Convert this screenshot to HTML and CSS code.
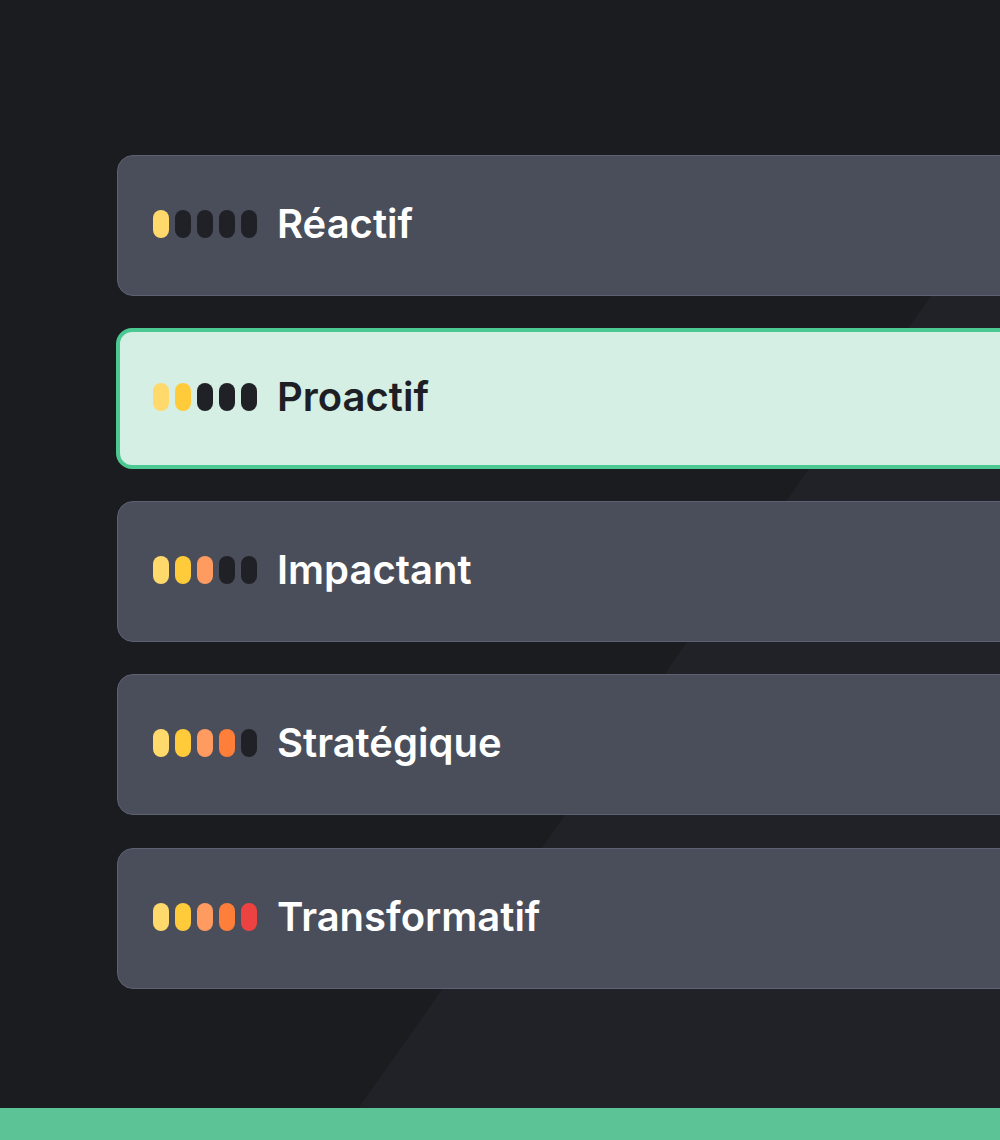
FILE: index.html
```html
<!DOCTYPE html>
<html lang="fr">
<head>
<meta charset="utf-8">
<title>Niveaux</title>
<link rel="stylesheet" href="styles.css">
</head>
<body>
<div class="page">
  <div class="backdrop"></div>
  <main class="levels">
    <div class="card">
      <div class="pills"><span class="pill c1"></span><span class="pill off"></span><span class="pill off"></span><span class="pill off"></span><span class="pill off"></span></div>
      <span class="label">Réactif</span>
    </div>
    <div class="card selected">
      <div class="pills"><span class="pill c1"></span><span class="pill c2"></span><span class="pill off"></span><span class="pill off"></span><span class="pill off"></span></div>
      <span class="label">Proactif</span>
    </div>
    <div class="card">
      <div class="pills"><span class="pill c1"></span><span class="pill c2"></span><span class="pill c3"></span><span class="pill off"></span><span class="pill off"></span></div>
      <span class="label">Impactant</span>
    </div>
    <div class="card">
      <div class="pills"><span class="pill c1"></span><span class="pill c2"></span><span class="pill c3"></span><span class="pill c4"></span><span class="pill off"></span></div>
      <span class="label">Stratégique</span>
    </div>
    <div class="card">
      <div class="pills"><span class="pill c1"></span><span class="pill c2"></span><span class="pill c3"></span><span class="pill c4"></span><span class="pill c5"></span></div>
      <span class="label">Transformatif</span>
    </div>
  </main>
  <footer class="bottom-bar"></footer>
</div>
</body>
</html>
```
FILE: styles.css
```css
* { box-sizing: border-box; }
html, body { margin: 0; padding: 0; }
body {
  background: #1b1c20;
  font-family: Inter, "Noto Sans", sans-serif;
  overflow: hidden;
}
.page {
  position: relative;
  width: 1000px;
  height: 1140px;
  display: flex;
  flex-direction: column;
  overflow: hidden;
}
.backdrop {
  position: absolute;
  inset: 0;
  background: #212227;
  clip-path: polygon(1000px 198px, 1000px 1140px, 336px 1140px);
  z-index: 0;
}
.levels {
  position: relative;
  z-index: 1;
  flex: 1;
  display: flex;
  flex-direction: column;
  gap: 32.3px;
  padding: 154.5px 0 0 117px;
}
.card {
  width: 1000px;
  height: 141px;
  flex: none;
  display: flex;
  align-items: center;
  gap: 20px;
  padding: 0 0 3px 35px;
  background: #4a4e5a;
  border: 1.5px solid #5e6173;
  border-radius: 16px;
}
.card.selected {
  background: #d5efe4;
  border: 4px solid #4cc993;
  margin-left: -1px;
  padding-left: 33px;
}
.pills { display: flex; gap: 6px; }
.pill {
  width: 16px;
  height: 28px;
  border-radius: 8px;
  background: #202127;
}
.pill.c1 { background: #ffd96b; }
.pill.c2 { background: #ffcb3b; }
.pill.c3 { background: #ff9a60; }
.pill.c4 { background: #ff7f3a; }
.pill.c5 { background: #ec4242; }
.label {
  color: #ffffff;
  font-size: 40px;
  font-weight: 600;
  letter-spacing: 0;
  line-height: 1;
}
.selected .label { color: #1e1f25; }
.bottom-bar {
  position: relative;
  z-index: 1;
  height: 32px;
  flex: none;
  background: #5cc397;
}
```
